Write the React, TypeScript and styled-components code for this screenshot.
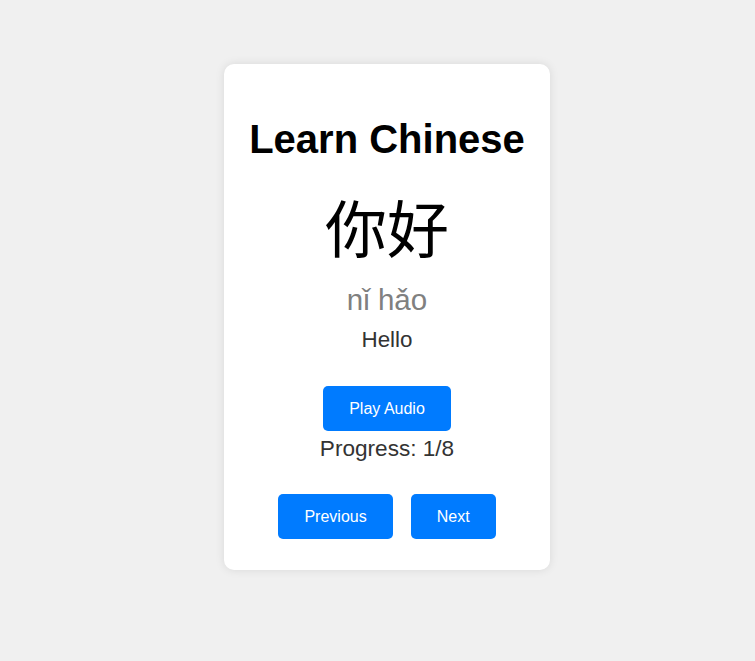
import React from "react";
import styled, { createGlobalStyle } from "styled-components";

const GlobalStyle = createGlobalStyle`
  html, body {
    margin: 0;
    padding: 0;
    background: #f0f0f0;
    font-family: "Liberation Sans", Arial, sans-serif;
  }
`;

const Page = styled.div`
  display: flex;
  justify-content: center;
  align-items: flex-start;
  padding: 64px 0 0 19px;
  min-height: 100vh;
  box-sizing: border-box;
`;

const Card = styled.div`
  width: 326px;
  box-sizing: border-box;
  background: #fff;
  border-radius: 10px;
  box-shadow: 0 0 10px rgba(0, 0, 0, 0.1);
  padding: 20px 20px 31px;
  display: flex;
  flex-direction: column;
  align-items: center;
  text-align: center;
`;

const Title = styled.h1`
  margin: 32px 0 0;
  font-size: 40px;
  font-weight: bold;
  color: #000;
  line-height: 46px;
`;

const Character = styled.div`
  margin-top: 26px;
  font-family: "Noto Sans CJK SC", "Liberation Sans", sans-serif;
  font-size: 62px;
  line-height: 76px;
  color: #000;
`;

const Pinyin = styled.div`
  margin-top: 19px;
  font-size: 29.5px;
  line-height: 33px;
  color: #808080;
`;

const Meaning = styled.div`
  margin-top: 11px;
  font-size: 22.4px;
  line-height: 25px;
  color: #333;
`;

const Button = styled.button`
  font-family: "Liberation Sans", Arial, sans-serif;
  font-size: 16px;
  line-height: 19px;
  color: #fff;
  background: #007bff;
  border: none;
  border-radius: 5px;
  padding: 13px 26px;
  cursor: pointer;
`;

const AudioButton = styled(Button)`
  margin-top: 34px;
`;

const Progress = styled.div`
  margin-top: 5px;
  font-size: 22.6px;
  line-height: 25px;
  color: #333;
`;

const NavRow = styled.div`
  margin-top: 33px;
  display: flex;
  gap: 18px;
  justify-content: center;
`;

export default function App() {
  return (
    <>
      <GlobalStyle />
      <Page>
        <Card>
          <Title>Learn Chinese</Title>
          <Character>你好</Character>
          <Pinyin>nǐ hǎo</Pinyin>
          <Meaning>Hello</Meaning>
          <AudioButton>Play Audio</AudioButton>
          <Progress>Progress: 1/8</Progress>
          <NavRow>
            <Button>Previous</Button>
            <Button>Next</Button>
          </NavRow>
        </Card>
      </Page>
    </>
  );
}
